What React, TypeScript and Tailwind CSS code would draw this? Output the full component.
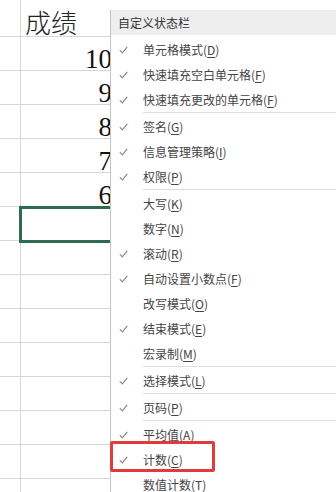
import React from "react";

type Item = { label: string; key: string; checked: boolean } | { sep: true };

const items: Item[] = [
  { label: "单元格模式", key: "D", checked: true },
  { label: "快速填充空白单元格", key: "F", checked: true },
  { label: "快速填充更改的单元格", key: "F", checked: true },
  { sep: true },
  { label: "签名", key: "G", checked: true },
  { label: "信息管理策略", key: "I", checked: true },
  { label: "权限", key: "P", checked: true },
  { sep: true },
  { label: "大写", key: "K", checked: false },
  { label: "数字", key: "N", checked: false },
  { label: "滚动", key: "R", checked: true },
  { label: "自动设置小数点", key: "F", checked: true },
  { label: "改写模式", key: "O", checked: false },
  { label: "结束模式", key: "E", checked: true },
  { label: "宏录制", key: "M", checked: false },
  { sep: true },
  { label: "选择模式", key: "L", checked: true },
  { sep: true },
  { label: "页码", key: "P", checked: true },
  { sep: true },
  { label: "平均值", key: "A", checked: true },
  { label: "计数", key: "C", checked: true },
  { label: "数值计数", key: "T", checked: false },
];

const numbers = ["10", "9", "8", "7", "6", "", "", "", "", "", "", "", "", ""];

function Check() {
  return (
    <svg width="9" height="8" viewBox="0 0 9 8" fill="none">
      <path d="M0.8 4.2 L3.3 6.8 L8.3 0.9" stroke="#8a8a8a" strokeWidth="1.2" />
    </svg>
  );
}

export default function App() {
  return (
    <div className="relative w-[336px] h-[492px] overflow-hidden bg-white font-['Noto_Sans_CJK_SC',sans-serif]">
      {/* spreadsheet grid */}
      <div className="flex flex-col">
        <div className="flex h-[37px] border-b border-[#d6d6d6]">
          <div className="w-[21px] shrink-0 border-r border-[#d6d6d6]" />
          <div className="w-[300px] pl-[4px] pt-[9px] text-[26px] leading-[26px] text-[#222] font-light">
            成绩
          </div>
        </div>
        {numbers.map((n, i) => (
          <div key={i} className="flex h-[34px] border-b border-[#d6d6d6]">
            <div className="w-[21px] shrink-0 border-r border-[#d6d6d6]" />
            <div className="w-[95px] shrink-0 flex items-end justify-end pr-[4px] font-['Liberation_Serif',serif] text-[27px] leading-[22px] text-[#111]">
              {n}
            </div>
            <div className="flex-1" />
          </div>
        ))}
      </div>

      {/* selected cell */}
      <div className="absolute left-[19px] top-[206px] w-[200px] h-[37px] border-[3px] border-[#2d6c4e]" />

      {/* context menu */}
      <div className="absolute left-[110px] top-[10px] right-0 bottom-0 bg-white border-l border-[#c4c4c4] flex flex-col">
        <div className="h-[25px] shrink-0 bg-[#eeeeee] pl-[7px] flex items-center text-[12px] text-[#333]">
          自定义状态栏
        </div>
        <div className="pt-[2px] flex flex-col">
          {items.map((it, i) =>
            "sep" in it ? (
              <div key={i} className="h-[2px] ml-[32px] border-t border-[#dedede]" />
            ) : (
              <div key={i} className="h-[25px] flex items-center text-[12px] text-[#444]">
                <div className="w-[32px] shrink-0 pl-[8px] flex items-center">
                  {it.checked ? <Check /> : null}
                </div>
                <span className="whitespace-nowrap leading-[25px]">
                  {it.label}(<span className="underline underline-offset-[2px]">{it.key}</span>)
                </span>
              </div>
            )
          )}
        </div>
      </div>

      {/* red highlight annotation */}
      <div className="absolute left-[110px] top-[441px] w-[105px] h-[31px] border-[3px] border-[#e03a3c] rounded-[2px]" />
    </div>
  );
}
